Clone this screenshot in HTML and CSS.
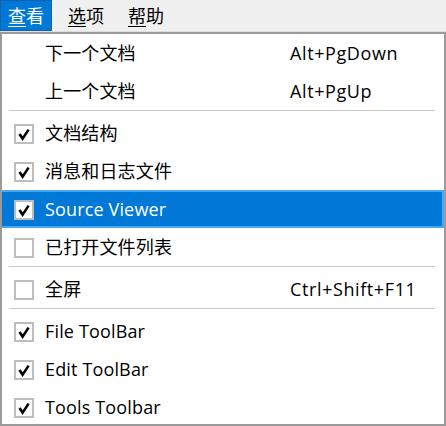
FILE: index.html
```html
<!DOCTYPE html>
<html lang="zh">
<head>
<meta charset="utf-8">
<title>Menu</title>
<link rel="stylesheet" href="styles.css">
</head>
<body>
<div class="app">
  <nav class="menubar">
    <div class="mb-item active"><u>查</u>看</div>
    <div class="mb-item"><u>选</u>项</div>
    <div class="mb-item"><u>帮</u>助</div>
  </nav>
  <div class="menu">
    <div class="row"><span class="box"></span><span class="label">下一个文档</span><span class="key">Alt+PgDown</span></div>
    <div class="row"><span class="box"></span><span class="label">上一个文档</span><span class="key">Alt+PgUp</span></div>
    <div class="sep"></div>
    <div class="row"><span class="box"><svg class="chk" viewBox="0 0 20 20"><rect x="1" y="1" width="18" height="18"/><polyline points="5.5,10 8.6,14.6 14.6,5.6"/></svg></span><span class="label">文档结构</span><span class="key"></span></div>
    <div class="row"><span class="box"><svg class="chk" viewBox="0 0 20 20"><rect x="1" y="1" width="18" height="18"/><polyline points="5.5,10 8.6,14.6 14.6,5.6"/></svg></span><span class="label">消息和日志文件</span><span class="key"></span></div>
    <div class="row selected"><span class="box"><svg class="chk" viewBox="0 0 20 20"><rect x="1" y="1" width="18" height="18"/><polyline points="5.5,10 8.6,14.6 14.6,5.6"/></svg></span><span class="label">Source Viewer</span><span class="key"></span></div>
    <div class="row"><span class="box"><svg class="chk" viewBox="0 0 20 20"><rect x="1" y="1" width="18" height="18"/></svg></span><span class="label">已打开文件列表</span><span class="key"></span></div>
    <div class="sep"></div>
    <div class="row"><span class="box"><svg class="chk" viewBox="0 0 20 20"><rect x="1" y="1" width="18" height="18"/></svg></span><span class="label">全屏</span><span class="key">Ctrl+Shift+F11</span></div>
    <div class="sep"></div>
    <div class="row"><span class="box"><svg class="chk" viewBox="0 0 20 20"><rect x="1" y="1" width="18" height="18"/><polyline points="5.5,10 8.6,14.6 14.6,5.6"/></svg></span><span class="label">File ToolBar</span><span class="key"></span></div>
    <div class="row"><span class="box"><svg class="chk" viewBox="0 0 20 20"><rect x="1" y="1" width="18" height="18"/><polyline points="5.5,10 8.6,14.6 14.6,5.6"/></svg></span><span class="label">Edit ToolBar</span><span class="key"></span></div>
    <div class="row"><span class="box"><svg class="chk" viewBox="0 0 20 20"><rect x="1" y="1" width="18" height="18"/><polyline points="5.5,10 8.6,14.6 14.6,5.6"/></svg></span><span class="label">Tools Toolbar</span><span class="key"></span></div>
  </div>
</div>
</body>
</html>
```
FILE: styles.css
```css
html, body {
  margin: 0;
  padding: 0;
  background: #f0f0f0;
}
body {
  font-family: "Open Sans", "Noto Sans CJK SC", sans-serif;
  font-size: 18px;
  color: #000;
}
.app {
  width: 446px;
  height: 426px;
  display: flex;
  flex-direction: column;
  overflow: hidden;
}
.menubar {
  height: 31px;
  display: flex;
  gap: 8px;
  background: #f0f0f0;
  border-bottom: 1px solid #dedede;
  flex: none;
}
.mb-item {
  height: 31px;
  line-height: 30px;
  padding: 0 7px;
  box-sizing: border-box;
  border: 1px solid transparent;
}
.mb-item u {
  text-decoration-thickness: 1px;
  text-underline-offset: 3px;
}
.mb-item.active {
  background: #0078d7;
  border-color: #1461a8;
  color: #fff;
}
.menu {
  flex: 1;
  background: #fff;
  border: 2px solid #9a9a9a;
  overflow: hidden;
}
.row {
  height: 38px;
  display: grid;
  grid-template-columns: 42px 246px 1fr;
  align-items: center;
  line-height: 38px;
  white-space: nowrap;
}
.row.selected {
  margin-left: -2px;
  padding-left: 2px;
  background: #0078d7;
  box-shadow: inset 0 0 0 2px #47a7f2;
  color: #fff;
}
.box {
  display: flex;
  align-items: center;
  height: 38px;
  padding-left: 12px;
}
.chk {
  width: 20px;
  height: 20px;
  margin-top: 2px;
}
.chk rect {
  fill: #fff;
  stroke: #bdbdbd;
  stroke-width: 2;
}
.chk polyline {
  fill: none;
  stroke: #000;
  stroke-width: 2.6;
}
.label {
  padding-left: 1px;
  letter-spacing: 0.15px;
}
.key {
  letter-spacing: 0.6px;
}
.sep {
  height: 4px;
  box-sizing: border-box;
  margin: 0 9px 0 7px;
  border-top: 1px solid #c8c8c8;
}
```
